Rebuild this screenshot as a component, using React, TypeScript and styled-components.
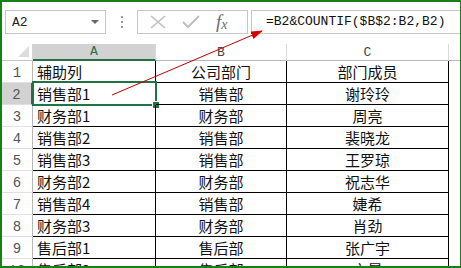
import styled, { createGlobalStyle } from 'styled-components';

const GREEN = '#217346';

const GlobalStyle = createGlobalStyle`
	html, body {
		margin: 0;
		padding: 0;
		background: #fff;
	}
`;

export default function App() {
	const rows = [
		{ id: 1, a: '辅助列', b: '公司部门', c: '部门成员' },
		{ id: 2, a: '销售部1', b: '销售部', c: '谢玲玲' },
		{ id: 3, a: '财务部1', b: '财务部', c: '周亮' },
		{ id: 4, a: '销售部2', b: '销售部', c: '裴晓龙' },
		{ id: 5, a: '销售部3', b: '销售部', c: '王罗琼' },
		{ id: 6, a: '财务部2', b: '财务部', c: '祝志华' },
		{ id: 7, a: '销售部4', b: '销售部', c: '婕希' },
		{ id: 8, a: '财务部3', b: '财务部', c: '肖劲' },
		{ id: 9, a: '售后部1', b: '售后部', c: '张广宇' },
		{ id: 10, a: '售后部2', b: '售后部', c: '卞晨' },
	];
	return (
		<Frame>
			<GlobalStyle />
			<FormulaBar>
				<NameBox>
					<span>A2</span>
					<Caret />
				</NameBox>
				<Dots>
					<i />
					<i />
					<i />
				</Dots>
				<FxBox>
					<svg width="16" height="14" viewBox="0 0 16 14">
						<path d="M1 1 L15 13 M15 1 L1 13" stroke="#bfbfbf" strokeWidth="1.6" fill="none" />
					</svg>
					<svg width="18" height="14" viewBox="0 0 18 14">
						<path d="M1 7 L6 12 L17 1" stroke="#bfbfbf" strokeWidth="2" fill="none" />
					</svg>
					<Fx>
						f<sub>x</sub>
					</Fx>
				</FxBox>
				<Formula>=B2&amp;COUNTIF($B$2:B2,B2)</Formula>
			</FormulaBar>
			<Sheet>
				<Corner>
					<Triangle />
				</Corner>
				<ColHead $active>A</ColHead>
				<ColHead>B</ColHead>
				<ColHead>C</ColHead>
				<ColHead $last />
				{rows.map((row) => (
					<Row key={row.id}>
						<RowHead $active={row.id === 2}>{row.id}</RowHead>
						<Cell $left>
							{row.a}
							{row.id === 2 && (
								<Selection>
									<Handle />
								</Selection>
							)}
						</Cell>
						<Cell>{row.b}</Cell>
						<Cell>{row.c}</Cell>
						<Spare />
					</Row>
				))}
			</Sheet>
			<Arrow width="461" height="268" viewBox="0 0 461 268">
				<defs>
					<marker id="head" markerWidth="12" markerHeight="8" refX="11" refY="4" orient="auto" markerUnits="userSpaceOnUse">
						<path d="M0 0 L12 4 L0 8 Z" fill="#d40000" />
					</marker>
				</defs>
				<line x1="112" y1="95" x2="262" y2="31" stroke="#c00000" strokeWidth="1" markerEnd="url(#head)" />
			</Arrow>
		</Frame>
	);
}

const Frame = styled.div`
	position: relative;
	width: 461px;
	height: 268px;
	box-sizing: border-box;
	border: 2px solid #1a7f1a;
	border-right-width: 1px;
	overflow: hidden;
	background: #fff;
	font-family: 'Noto Sans CJK SC', 'Liberation Sans', sans-serif;
`;

const FormulaBar = styled.div`
	display: flex;
	align-items: center;
	height: 24px;
	margin: 8px 0 10px 3px;
`;

const NameBox = styled.div`
	display: flex;
	align-items: center;
	justify-content: space-between;
	box-sizing: border-box;
	width: 101px;
	height: 24px;
	border: 1px solid #c6c6c6;
	padding: 0 6px 0 6px;
	font-family: 'Liberation Mono', monospace;
	font-size: 13px;
	color: #222;
`;

const Caret = styled.span`
	width: 0;
	height: 0;
	border-left: 4px solid transparent;
	border-right: 4px solid transparent;
	border-top: 4px solid #666;
`;

const Dots = styled.div`
	display: flex;
	flex-direction: column;
	align-items: center;
	gap: 3px;
	width: 31px;
	i {
		width: 2px;
		height: 2px;
		background: #9a9a9a;
	}
`;

const FxBox = styled.div`
	display: flex;
	align-items: center;
	gap: 16px;
	box-sizing: border-box;
	width: 111px;
	height: 24px;
	padding-left: 12px;
	border: 1px solid #c6c6c6;
`;

const Fx = styled.span`
	font-family: 'Liberation Serif', serif;
	font-style: italic;
	font-size: 19px;
	color: #6e6e6e;
	line-height: 1;
	sub {
		font-size: 14px;
		vertical-align: -1px;
	}
`;

const Formula = styled.div`
	flex: 1;
	box-sizing: border-box;
	height: 24px;
	margin-left: 3px;
	border: 1px solid #c6c6c6;
	border-right: none;
	padding: 3px 0 0 14px;
	font-family: 'Liberation Mono', monospace;
	font-size: 13px;
	color: #111;
	white-space: nowrap;
`;

const Sheet = styled.div`
	display: grid;
	grid-template-columns: 31px 123px 131px 162px 1fr;
	grid-template-rows: 17px;
	grid-auto-rows: 22px;
`;

const Row = styled.div`
	display: contents;
`;

const Corner = styled.div`
	position: relative;
	border-right: 1px solid #d4d4d4;
	border-bottom: 1px solid #c6c6c6;
`;

const Triangle = styled.span`
	position: absolute;
	right: 3px;
	bottom: 3px;
	width: 0;
	height: 0;
	border-left: 11px solid transparent;
	border-bottom: 11px solid #dcdcdc;
`;

const ColHead = styled.div<{ $active?: boolean; $last?: boolean }>`
	display: flex;
	align-items: center;
	justify-content: center;
	box-sizing: border-box;
	background: ${(p) => (p.$active ? '#d2d2d2' : '#fff')};
	color: ${(p) => (p.$active ? GREEN : '#444')};
	border-right: ${(p) => (p.$last ? 'none' : '1px solid #d9d9d9')};
	border-bottom: ${(p) => (p.$active ? `2px solid ${GREEN}` : '1px solid #b8b8b8')};
	font-family: 'Liberation Mono', monospace;
	font-size: 13px;
`;

const RowHead = styled.div<{ $active?: boolean }>`
	display: flex;
	align-items: center;
	justify-content: center;
	box-sizing: border-box;
	padding-top: 3px;
	background: ${(p) => (p.$active ? '#d2d2d2' : '#fff')};
	border-right: ${(p) => (p.$active ? `2px solid ${GREEN}` : '1px solid #b8b8b8')};
	border-bottom: 1px solid #e0e0e0;
	font-family: 'Liberation Mono', monospace;
	font-size: 14px;
	color: #555;
`;

const Cell = styled.div<{ $left?: boolean }>`
	position: relative;
	display: flex;
	align-items: center;
	justify-content: ${(p) => (p.$left ? 'flex-start' : 'center')};
	box-sizing: border-box;
	padding-left: ${(p) => (p.$left ? '4px' : '0')};
	border-right: 1px solid #000;
	border-bottom: 1px solid #000;
	font-size: 15px;
	color: #111;
	white-space: nowrap;
`;

const Spare = styled.div``;

const Selection = styled.div`
	position: absolute;
	left: -1px;
	top: -2px;
	right: -2px;
	bottom: -2px;
	border: 2px solid ${GREEN};
`;

const Handle = styled.span`
	position: absolute;
	right: -5px;
	bottom: -5px;
	width: 6px;
	height: 6px;
	background: ${GREEN};
	border: 1px solid #fff;
`;

const Arrow = styled.svg`
	position: absolute;
	left: -2px;
	top: -2px;
	pointer-events: none;
`;
